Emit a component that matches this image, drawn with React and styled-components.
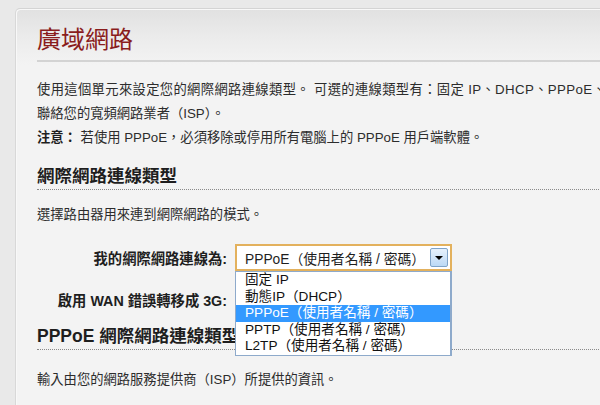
import styled, { createGlobalStyle } from "styled-components";

const GlobalStyle = createGlobalStyle`
  html, body {
    margin: 0;
    padding: 0;
    background: #e9e9e9;
    overflow: hidden;
  }
  body {
    font-family: "Liberation Sans", "Noto Sans CJK TC", sans-serif;
    color: #2c2c2c;
  }
`;

const Page = styled.div`
  width: 600px;
  height: 405px;
  padding: 8px 0 0 15px;
  box-sizing: border-box;
  overflow: hidden;
`;

const Panel = styled.div`
  width: 800px;
  height: 420px;
  box-sizing: border-box;
  padding: 0 0 0 21px;
  border-top: 1px solid #d4d4d4;
  border-left: 1px solid #d8d8d8;
  border-radius: 5px 0 0 0;
  box-shadow: inset 1px 1px 0 #f8f8f8;
  background: linear-gradient(#e1e1e1 0px, #ececec 30px, #f3f3f3 56px, #f3f3f3 100%);
`;

const Title = styled.h1`
  margin: 0;
  padding: 16px 0 5px;
  font-size: 24px;
  line-height: 30px;
  font-weight: normal;
  color: #8a1d1d;
  border-bottom: 2px solid #d3d3d3;
`;

const Text = styled.p`
  margin: ${(p) => p.$top || 0}px 0 0;
  font-size: 13.3px;
  line-height: 24px;
  white-space: nowrap;
`;

/* first line of the intro is justified in the original, so it runs a bit wider */
const Justified = styled.span`
  letter-spacing: 0.35px;
`;

const Strong = styled.b`
  color: #1e1e1e;
`;

const Heading = styled.h2`
  margin: ${(p) => p.$top}px 0 0;
  padding-bottom: 1px;
  font-size: 17.5px;
  line-height: 24px;
  font-weight: bold;
  color: #1e1e1e;
  border-bottom: 1px dotted #8a8a8a;
`;

const Form = styled.div`
  margin-top: 17px;
  display: grid;
  grid-template-columns: 190px 217px;
  grid-auto-rows: 27px;
  column-gap: 8px;
  row-gap: 15px;
  align-items: center;
`;

const Label = styled.div`
  text-align: right;
  font-size: 14.3px;
  font-weight: bold;
  color: #1e1e1e;
  white-space: nowrap;
`;

const SelectWrap = styled.div`
  position: relative;
  height: 27px;
`;

const SelectBox = styled.div`
  height: 27px;
  box-sizing: border-box;
  border: 2px solid #e3b15d;
  background: #fff;
  display: flex;
  align-items: center;
  padding: 0 2px 0 8px;
  font-size: 13.8px;
  color: #1e1e1e;
`;

const SelectValue = styled.span`
  flex: 1;
  white-space: nowrap;
`;

const ArrowButton = styled.span`
  width: 18px;
  height: 19px;
  box-sizing: border-box;
  border: 1px solid #7fa3c8;
  border-radius: 2px;
  background: linear-gradient(#e6f1fc, #bcd9f6);
  display: flex;
  align-items: center;
  justify-content: center;
`;

const Triangle = styled.span`
  width: 0;
  height: 0;
  border-left: 4px solid transparent;
  border-right: 4px solid transparent;
  border-top: 4px solid #000;
  margin-top: 1px;
`;

const OptionList = styled.ul`
  position: absolute;
  top: 100%;
  left: 0;
  width: 100%;
  box-sizing: border-box;
  margin: 0;
  padding: 0;
  list-style: none;
  background: #fff;
  border: 1px solid #8eaacb;
  border-right-width: 2px;
  z-index: 2;
`;

const Option = styled.li`
  height: 16.6px;
  line-height: 16.6px;
  padding-left: 9px;
  font-size: 13.6px;
  white-space: nowrap;
  color: ${(p) => (p.$active ? "#fff" : "#111")};
  background: ${(p) => (p.$active ? "#3399ff" : "transparent")};
`;

const options = [
  "固定 IP",
  "動態IP（DHCP）",
  "PPPoE（使用者名稱 / 密碼）",
  "PPTP（使用者名稱 / 密碼）",
  "L2TP（使用者名稱 / 密碼）",
];

const App = () => {
  const selected = 2;

  return (
    <Page>
      <GlobalStyle />
      <Panel>
        <Title>廣域網路</Title>
        <Text $top={16}>
          <Justified>
            使用這個單元來設定您的網際網路連線類型。&nbsp;可選的連線類型有：固定 IP、DHCP、PPPoE、PPTP 或 L2TP。若您不確定，請
          </Justified>
          <br />
          聯絡您的寬頻網路業者（ISP）。
          <br />
          <Strong>注意：</Strong> 若使用 PPPoE，必須移除或停用所有電腦上的 PPPoE 用戶端軟體。
        </Text>
        <Heading $top={14}>網際網路連線類型</Heading>
        <Text $top={13}>選擇路由器用來連到網際網路的模式。</Text>
        <Form>
          <Label>我的網際網路連線為:</Label>
          <SelectWrap>
            <SelectBox>
              <SelectValue>{options[selected]}</SelectValue>
              <ArrowButton>
                <Triangle />
              </ArrowButton>
            </SelectBox>
            <OptionList>
              {options.map((o, i) => (
                <Option key={o} $active={i === selected}>
                  {o}
                </Option>
              ))}
            </OptionList>
          </SelectWrap>
          <Label>啟用 WAN 錯誤轉移成 3G:</Label>
          <div />
        </Form>
        <Heading $top={11}>PPPoE 網際網路連線類型</Heading>
        <Text $top={18}>輸入由您的網路服務提供商（ISP）所提供的資訊。</Text>
      </Panel>
    </Page>
  );
};

export default App;
